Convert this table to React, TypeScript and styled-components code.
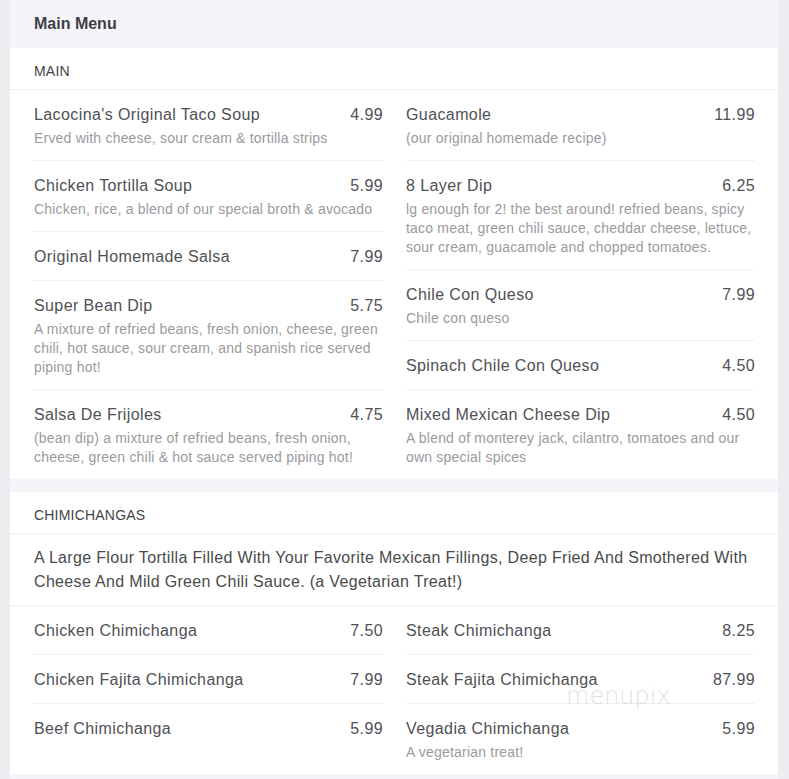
import React from 'react';
import styled, { createGlobalStyle } from 'styled-components';

const GlobalStyle = createGlobalStyle`
  body {
    margin: 0;
    background: #ececf1;
    font-family: 'Liberation Sans', Arial, sans-serif;
  }
`;

const MenuWrapper = styled.div`
  position: relative;
  margin: 0 11px 0 10px;
  background: #f5f5f9;
  padding-bottom: 6px;
`;

const MenuTitle = styled.h1`
  margin: 0;
  height: 48px;
  display: flex;
  align-items: center;
  padding: 0 24px;
  font-size: 16px;
  font-weight: 700;
  color: #3f3f45;
`;

const Section = styled.section`
  background: #fff;
  & + & {
    margin-top: 13px;
  }
`;

const SectionHeader = styled.h2`
  margin: 0;
  height: 42px;
  box-sizing: border-box;
  padding: 15px 24px 0;
  font-size: 14px;
  line-height: 16px;
  font-weight: 400;
  letter-spacing: 0.2px;
  color: #444;
  text-transform: uppercase;
  border-bottom: 1px solid #f0f0f2;
`;

const SectionIntro = styled.p`
  margin: 0;
  padding: 12px 22px 11px 24px;
  font-size: 16px;
  line-height: 24px;
  letter-spacing: 0.33px;
  color: #4a4a4a;
  border-bottom: 1px solid #f0f0f2;
`;

const Columns = styled.div`
  display: grid;
  grid-template-columns: 1fr 1fr;
  column-gap: 23px;
  padding: 0 23px 0 24px;
`;

const Column = styled.div`
  display: flex;
  flex-direction: column;
`;

const Item = styled.div`
  padding: 14px 0 12px;
  & + & {
    border-top: 1px solid #f0f0f2;
  }
`;

const ItemTop = styled.div`
  display: flex;
  justify-content: space-between;
  align-items: baseline;
  font-size: 16px;
  line-height: 22px;
  letter-spacing: 0.4px;
  color: #505055;
`;

const Price = styled.span`
  margin-left: 12px;
`;

const ItemDesc = styled.div`
  margin-top: 3px;
  font-size: 14px;
  line-height: 19px;
  letter-spacing: 0.2px;
  color: #9a9a9e;
`;

const Watermark = styled.div`
  position: absolute;
  left: 556px;
  top: 682px;
  font-family: 'DejaVu Sans', sans-serif;
  font-size: 24px;
  font-weight: 200;
  color: rgba(200, 200, 200, 0.55);
  pointer-events: none;
`;

type TItem = { name: string; price: string; desc?: string };

const mainLeft: TItem[] = [
  { name: "Lacocina's Original Taco Soup", price: '4.99', desc: 'Erved with cheese, sour cream & tortilla strips' },
  { name: 'Chicken Tortilla Soup', price: '5.99', desc: 'Chicken, rice, a blend of our special broth & avocado' },
  { name: 'Original Homemade Salsa', price: '7.99' },
  {
    name: 'Super Bean Dip',
    price: '5.75',
    desc: 'A mixture of refried beans, fresh onion, cheese, green chili, hot sauce, sour cream, and spanish rice served piping hot!',
  },
  {
    name: 'Salsa De Frijoles',
    price: '4.75',
    desc: '(bean dip) a mixture of refried beans, fresh onion, cheese, green chili & hot sauce served piping hot!',
  },
];

const mainRight: TItem[] = [
  { name: 'Guacamole', price: '11.99', desc: '(our original homemade recipe)' },
  {
    name: '8 Layer Dip',
    price: '6.25',
    desc: 'lg enough for 2! the best around! refried beans, spicy taco meat, green chili sauce, cheddar cheese, lettuce, sour cream, guacamole and chopped tomatoes.',
  },
  { name: 'Chile Con Queso', price: '7.99', desc: 'Chile con queso' },
  { name: 'Spinach Chile Con Queso', price: '4.50' },
  {
    name: 'Mixed Mexican Cheese Dip',
    price: '4.50',
    desc: 'A blend of monterey jack, cilantro, tomatoes and our own special spices',
  },
];

const chimiLeft: TItem[] = [
  { name: 'Chicken Chimichanga', price: '7.50' },
  { name: 'Chicken Fajita Chimichanga', price: '7.99' },
  { name: 'Beef Chimichanga', price: '5.99' },
];

const chimiRight: TItem[] = [
  { name: 'Steak Chimichanga', price: '8.25' },
  { name: 'Steak Fajita Chimichanga', price: '87.99' },
  { name: 'Vegadia Chimichanga', price: '5.99', desc: 'A vegetarian treat!' },
];

const ItemList: React.FC<{ items: TItem[] }> = ({ items }) => (
  <Column>
    {items.map((item) => (
      <Item key={item.name}>
        <ItemTop>
          <span>{item.name}</span>
          <Price>{item.price}</Price>
        </ItemTop>
        {item.desc && <ItemDesc>{item.desc}</ItemDesc>}
      </Item>
    ))}
  </Column>
);

const App: React.FC = () => {
  return (
    <>
      <GlobalStyle />
      <MenuWrapper>
        <MenuTitle>Main Menu</MenuTitle>
        <Section>
          <SectionHeader>Main</SectionHeader>
          <Columns>
            <ItemList items={mainLeft} />
            <ItemList items={mainRight} />
          </Columns>
        </Section>
        <Section>
          <SectionHeader>Chimichangas</SectionHeader>
          <SectionIntro>
            A Large Flour Tortilla Filled With Your Favorite Mexican Fillings, Deep Fried And
            Smothered With Cheese And Mild Green Chili Sauce. (a Vegetarian Treat!)
          </SectionIntro>
          <Columns>
            <ItemList items={chimiLeft} />
            <ItemList items={chimiRight} />
          </Columns>
        </Section>
        <Watermark>menupix</Watermark>
      </MenuWrapper>
    </>
  );
};

export default App;
